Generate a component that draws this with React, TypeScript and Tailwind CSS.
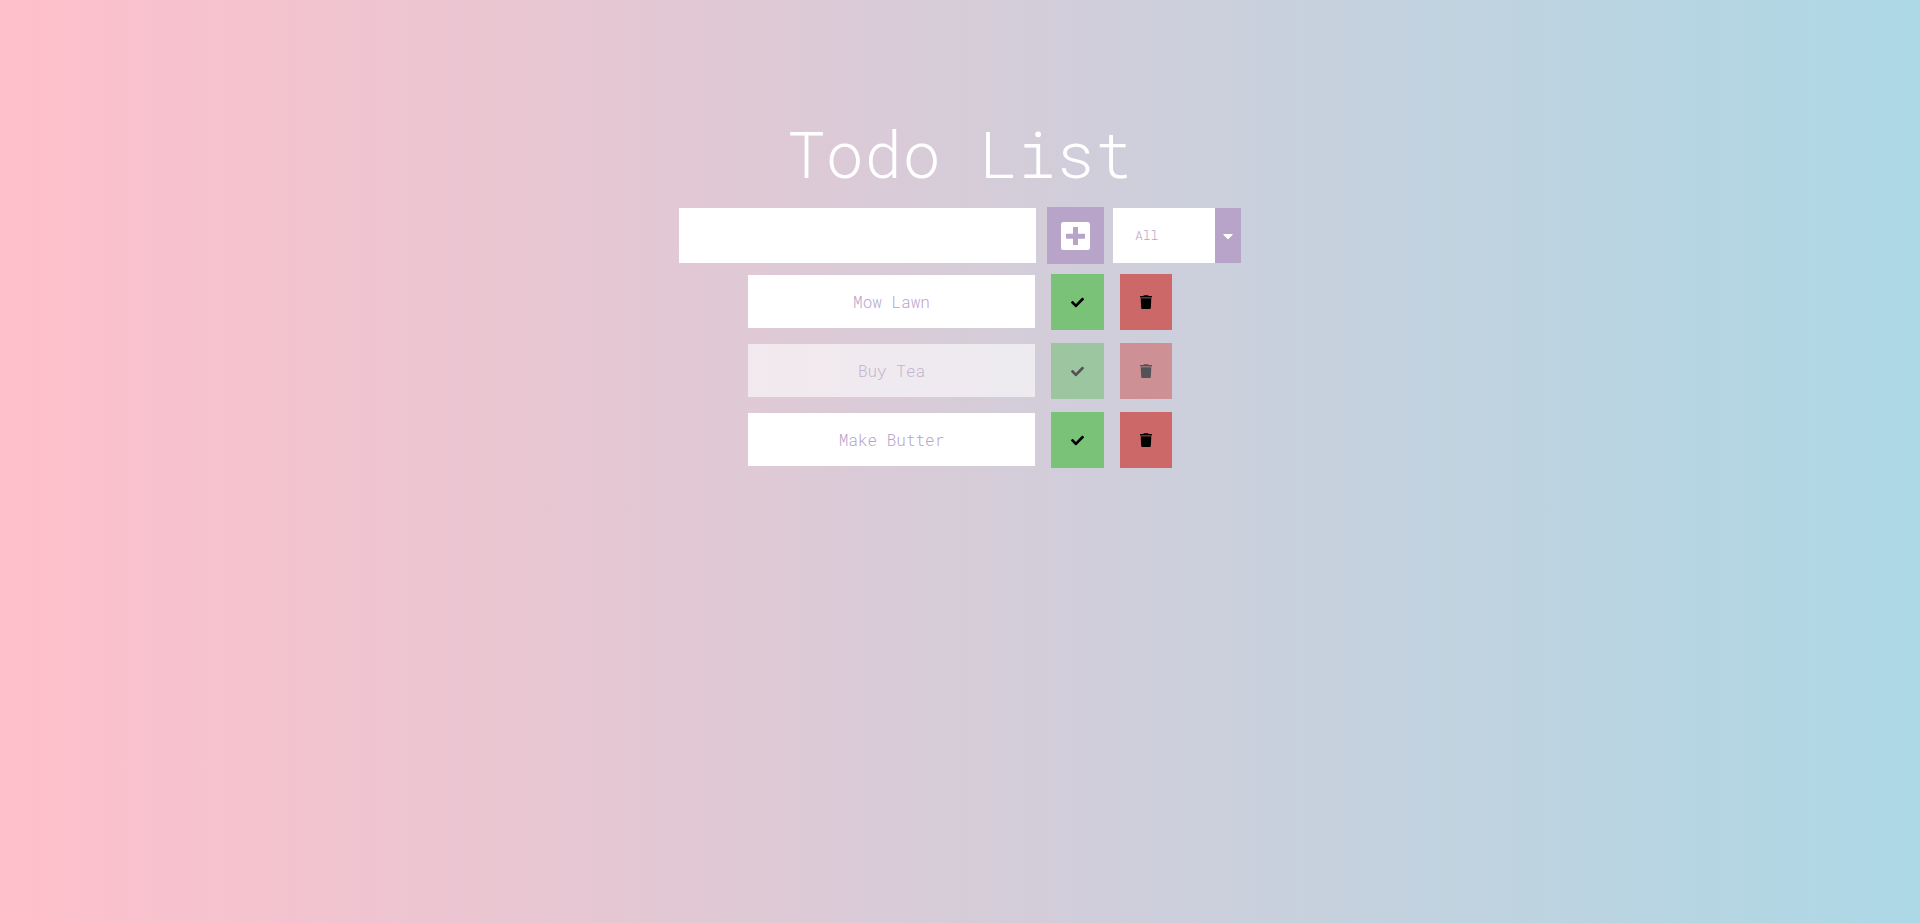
import { useState, type FormEvent } from "react";
import { FaCaretDown, FaCheck } from "react-icons/fa";

type Todo = { id: number; text: string; done: boolean };

const initialTodos: Todo[] = [
  { id: 1, text: "Mow Lawn", done: false },
  { id: 2, text: "Buy Tea", done: true },
  { id: 3, text: "Make Butter", done: false },
];

function PlusSquareIcon() {
  return (
    <svg viewBox="0 0 29 28" className="h-7 w-[29px]" fill="currentColor" aria-hidden="true">
      <path
        fillRule="evenodd"
        d="M2.500 0H26.500Q29 0 29 2.500V25.500Q29 28 26.500 28H2.500Q0 28 0 25.500V2.500Q0 0 2.500 0ZM12 5V11.800H5V16.800H12V23H17V16.800H24V11.800H17V5Z"
      />
    </svg>
  );
}

function TrashIcon() {
  return (
    <svg viewBox="0 0 12 14" className="h-3.5 w-3" fill="currentColor" aria-hidden="true">
      <path d="M0 1.400Q0 1 .4 1H3.200L3.700 .5Q3.900 .3 4.200 .3H7.800Q8.100 .3 8.300 .5L8.800 1H11.600Q12 1 12 1.400V2.400H0Z" />
      <path d="M.7 3.200H11.300L10.800 13Q10.700 14 9.700 14H2.300Q1.300 14 1.200 13Z" />
    </svg>
  );
}

function TodoRow({
  todo,
  onToggle,
  onDelete,
}: {
  todo: Todo;
  onToggle: () => void;
  onDelete: () => void;
}) {
  return (
    <li className={`flex items-start ${todo.done ? "opacity-60" : ""}`}>
      <span className="mt-px flex h-[53px] w-[287px] items-center justify-center bg-white text-base text-[#b8a4c9]">
        {todo.text}
      </span>
      <button
        type="button"
        aria-label={`Complete ${todo.text}`}
        onClick={onToggle}
        className="ml-4 flex h-14 w-[53px] items-center justify-center bg-[#7ac278] text-black"
      >
        <FaCheck className="size-[13px]" />
      </button>
      <button
        type="button"
        aria-label={`Delete ${todo.text}`}
        onClick={onDelete}
        className="ml-4 flex h-14 w-[52px] items-center justify-center bg-[#cd6868] text-black"
      >
        <TrashIcon />
      </button>
    </li>
  );
}

export default function App() {
  const [todos, setTodos] = useState(initialTodos);
  const [draft, setDraft] = useState("");
  const [filter, setFilter] = useState("all");

  const addTodo = (event: FormEvent) => {
    event.preventDefault();
    if (!draft.trim()) return;
    setTodos([...todos, { id: Date.now(), text: draft.trim(), done: false }]);
    setDraft("");
  };

  const visible = todos.filter(
    (todo) => filter === "all" || (filter === "completed") === todo.done,
  );

  return (
    <main className="flex min-h-screen flex-col items-center bg-linear-to-r/srgb from-[#ffc0cb] to-[#add8e6] pt-[108px] font-['Roboto_Mono','Liberation_Mono',monospace] font-light">
      <h1 className="pb-2 text-[64px] leading-[91px] font-[340] text-white">Todo List</h1>
      <form onSubmit={addTodo} className="flex items-center">
        <input
          type="text"
          aria-label="New todo"
          value={draft}
          onChange={(event) => setDraft(event.target.value)}
          className="h-[55px] w-[357px] bg-white px-4 text-[#b8a4c9] outline-none"
        />
        <button
          type="submit"
          aria-label="Add todo"
          className="ml-[11px] flex size-[57px] items-center justify-center bg-[#b8a4c9] text-white"
        >
          <PlusSquareIcon />
        </button>
        <div className="relative ml-[9px]">
          <select
            aria-label="Filter todos"
            value={filter}
            onChange={(event) => setFilter(event.target.value)}
            className="block h-[55px] w-32 appearance-none bg-white pr-8 pl-[22px] text-[13px] text-[#b8a4c9] outline-none"
          >
            <option value="all">All</option>
            <option value="completed">Completed</option>
            <option value="incomplete">Incomplete</option>
          </select>
          <span className="pointer-events-none absolute inset-y-0 right-0 flex w-[26px] items-center justify-center bg-[#b8a4c9] text-white">
            <FaCaretDown className="size-4" />
          </span>
        </div>
      </form>
      <ul className="mt-[10px] flex flex-col gap-[13px]">
        {visible.map((todo) => (
          <TodoRow
            key={todo.id}
            todo={todo}
            onToggle={() =>
              setTodos(todos.map((t) => (t.id === todo.id ? { ...t, done: !t.done } : t)))
            }
            onDelete={() => setTodos(todos.filter((t) => t.id !== todo.id))}
          />
        ))}
      </ul>
    </main>
  );
}
